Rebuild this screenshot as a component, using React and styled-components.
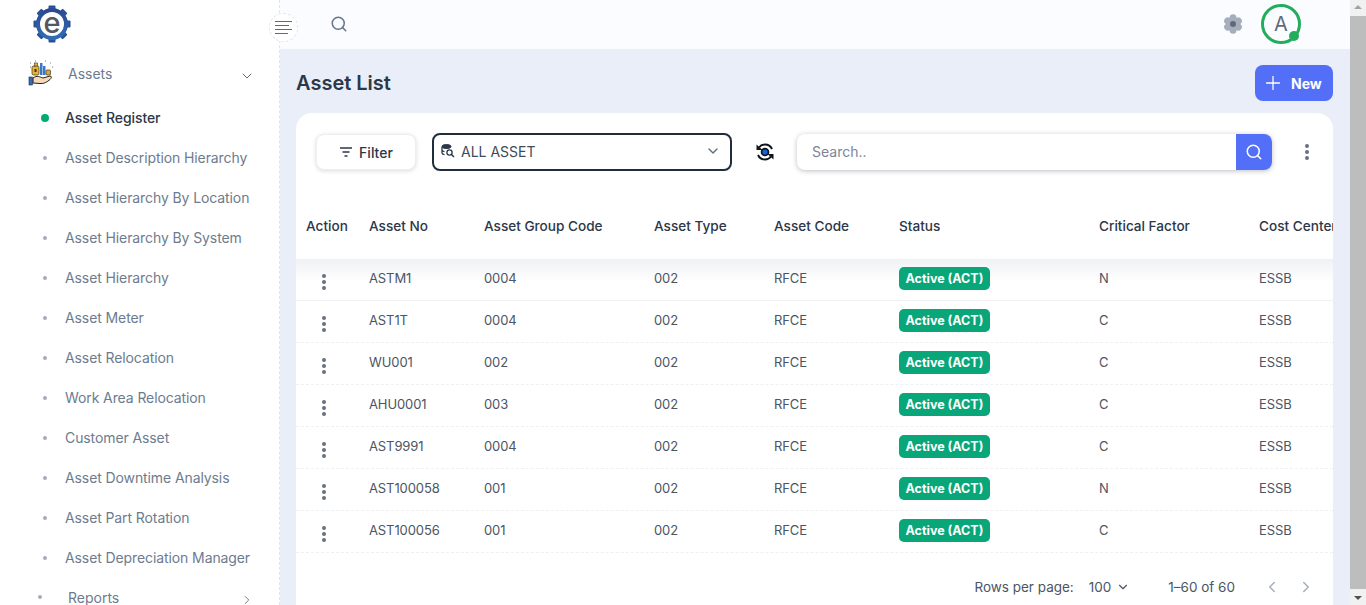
import React from "react";
import styled, { createGlobalStyle } from "styled-components";
import { ChevronDown, ChevronLeft, ChevronRight, Plus, Search } from "lucide-react";

const navItems = [
  "Asset Register",
  "Asset Description Hierarchy",
  "Asset Hierarchy By Location",
  "Asset Hierarchy By System",
  "Asset Hierarchy",
  "Asset Meter",
  "Asset Relocation",
  "Work Area Relocation",
  "Customer Asset",
  "Asset Downtime Analysis",
  "Asset Part Rotation",
  "Asset Depreciation Manager",
];

const columns = ["Action", "Asset No", "Asset Group Code", "Asset Type", "Asset Code", "Status", "Critical Factor", "Cost Center"];

const rows = [
  ["ASTM1", "0004", "N"],
  ["AST1T", "0004", "C"],
  ["WU001", "002", "C"],
  ["AHU0001", "003", "C"],
  ["AST9991", "0004", "C"],
  ["AST100058", "001", "N"],
  ["AST100056", "001", "C"],
];

const GlobalStyle = createGlobalStyle`
  html, body { margin: 0; padding: 0; overflow: hidden; }
  body { font-family: Inter, "Noto Sans", sans-serif; }
  * { box-sizing: border-box; }
`;

const Page = styled.div`
  display: flex;
  width: 1366px;
  height: 605px;
  overflow: hidden;
  position: relative;
`;

const Sidebar = styled.aside`
  width: 280px;
  flex: none;
  background: #fff;
  border-right: 1px dashed #dfe3ea;
`;

const LogoBox = styled.div`
  height: 50px;
  padding: 5px 0 0 33px;
`;

const MenuRow = styled.div`
  display: flex;
  align-items: center;
  height: ${(p) => p.$h}px;
  padding: 0 24px 2px ${(p) => p.$left}px;
  color: #6d7b8f;
  font-size: 14px;
`;

const MenuIcon = styled.span`
  width: ${(p) => p.$w}px;
  flex: none;
  display: flex;
  align-items: center;
`;

const SmallDot = styled.i`
  width: 4px;
  height: 4px;
  border-radius: 50%;
  background: #a3adba;
`;

const MenuLabel = styled.span`
  flex: 1;
`;

const MenuChevron = styled.span`
  display: flex;
  margin: 5px ${(p) => p.$right}px 0 0;
  color: #5f6b7c;
`;

const NavItem = styled.div`
  display: flex;
  align-items: center;
  height: 40px;
  padding: 0 0 2px 41px;
  font-size: 14px;
  letter-spacing: -0.1px;
  font-weight: ${(p) => (p.$active ? 500 : 400)};
  color: ${(p) => (p.$active ? "#2d3748" : "#6d7b8f")};
`;

const NavDot = styled.i`
  width: ${(p) => (p.$active ? 8 : 4)}px;
  height: ${(p) => (p.$active ? 8 : 4)}px;
  margin: 2px ${(p) => (p.$active ? 16 : 18)}px 0 ${(p) => (p.$active ? 0 : 2)}px;
  border-radius: 50%;
  background: ${(p) => (p.$active ? "#00ab6f" : "#a3adba")};
`;

const Toggle = styled.div`
  position: absolute;
  left: 269px;
  top: 13px;
  width: 29px;
  height: 29px;
  border-radius: 50%;
  border: 1px dashed #e3e6ec;
  background: #fff;
  display: flex;
  flex-direction: column;
  justify-content: center;
  gap: 3px;
  padding-left: 5px;
`;

const ToggleLine = styled.i`
  display: block;
  height: 1px;
  width: ${(p) => p.$w}px;
  background: #5f6b7c;
`;

const Main = styled.div`
  flex: 1;
  min-width: 0;
  display: flex;
  flex-direction: column;
  background: #e9eef9;
`;

const TopBar = styled.header`
  height: 49px;
  flex: none;
  background: #fbfcff;
  display: flex;
  align-items: center;
  padding: 0 49px 1px 50px;
  color: #64748b;
`;

const Grow = styled.div`
  flex: 1;
`;

const Avatar = styled.div`
  position: relative;
  width: 40px;
  height: 40px;
  margin-left: 18px;
  border: 3px solid #22ad5c;
  border-radius: 50%;
  display: flex;
  align-items: center;
  justify-content: center;
  font-size: 20px;
  color: #5f6b7c;
`;

const OnlineDot = styled.i`
  position: absolute;
  right: -1px;
  bottom: 0;
  width: 10px;
  height: 10px;
  border-radius: 50%;
  background: #22ad5c;
`;

const Content = styled.main`
  flex: 1;
  min-height: 0;
  padding: 16px 17px 0 16px;
  display: flex;
  flex-direction: column;
`;

const TitleRow = styled.div`
  display: flex;
  align-items: center;
  justify-content: space-between;
  height: 36px;
  margin-bottom: 12px;
`;

const Title = styled.h1`
  margin: 0;
  font-size: 20px;
  font-weight: 600;
  color: #2d3748;
`;

const NewButton = styled.button`
  width: 78px;
  height: 36px;
  border: 0;
  border-radius: 8px;
  background: #536ff8;
  color: #fff;
  font: 700 14px Inter, sans-serif;
  display: flex;
  align-items: center;
  padding: 0 0 0 7px;
  gap: 7px;
`;

const Card = styled.section`
  flex: 1;
  min-height: 0;
  background: #fff;
  border-radius: 16px 16px 0 0;
  overflow: hidden;
`;

const Toolbar = styled.div`
  display: flex;
  align-items: center;
  height: 78px;
  padding: 0 20px;
`;

const FilterButton = styled.button`
  width: 100px;
  height: 36px;
  flex: none;
  border: 1px solid #eceef2;
  border-radius: 8px;
  background: #fff;
  box-shadow: 0 1px 4px rgba(30, 40, 60, 0.16);
  font: 500 14px Inter, sans-serif;
  color: #2d3748;
  display: flex;
  align-items: center;
  justify-content: center;
  gap: 6px;
`;

const SelectBox = styled.div`
  width: 300px;
  height: 38px;
  flex: none;
  margin-left: 16px;
  border: 2px solid #1f2d3d;
  border-radius: 8px;
  display: flex;
  align-items: center;
  padding: 0 9px 2px 7px;
  font-size: 14px;
  color: #3f4a5a;
  gap: 6px;
`;

const RefreshWrap = styled.span`
  display: flex;
  flex: none;
  margin-left: 23px;
`;

const SearchBox = styled.div`
  width: 475px;
  height: 36px;
  flex: none;
  margin-left: 22px;
  display: flex;
  align-items: center;
  border-radius: 8px;
  box-shadow: 0 1px 5px rgba(30, 40, 60, 0.3);
  font-size: 14px;
  color: #7b8696;
  padding-left: 15px;
  overflow: hidden;
`;

const SearchHint = styled.span`
  flex: 1;
  padding-bottom: 2px;
`;

const SearchButton = styled.div`
  width: 36px;
  height: 36px;
  background: #536ff8;
  color: #fff;
  display: flex;
  align-items: center;
  justify-content: center;
`;

const ToolbarMore = styled.span`
  flex: none;
  margin: -8px 0 0 17px;
`;

const Table = styled.div`
  width: 1037px;
`;

const gridCols = "63px 115px 170px 120px 125px 200px 160px 160px";

const HeadRow = styled.div`
  display: grid;
  grid-template-columns: ${gridCols};
  align-items: center;
  height: 68px;
  padding: 2px 0 0 10px;
  white-space: nowrap;
  font-size: 13.6px;
  font-weight: 500;
  color: #2d3748;
`;

const Row = styled.div`
  display: grid;
  grid-template-columns: ${gridCols};
  align-items: center;
  height: 42px;
  padding: 0 0 3px 10px;
  border-bottom: 1px dashed #eef0f3;
  font-size: 13px;
  letter-spacing: -0.1px;
  color: #4b5563;
  background: ${(p) => (p.$first ? "linear-gradient(#f0f1f5, #fff 55%)" : "#fff")};
`;

const Dots = styled.div`
  display: flex;
  flex-direction: column;
  gap: 2px;
  width: 4px;
  margin: 8px 0 0 16px;
`;

const Dot = styled.i`
  width: 4px;
  height: 4px;
  border-radius: 50%;
  background: #66727f;
`;

const Badge = styled.span`
  justify-self: start;
  height: 23px;
  width: 91px;
  margin-top: 1px;
  padding-bottom: 1px;
  border-radius: 5px;
  background: #08a678;
  color: #fff;
  font-size: 12.5px;
  font-weight: 700;
  letter-spacing: 0;
  display: flex;
  align-items: center;
  justify-content: center;
`;

const Pager = styled.div`
  display: flex;
  align-items: center;
  height: 66px;
  padding: 2px 18px 0 0;
  justify-content: flex-end;
  font-size: 13.5px;
  color: #4b5563;
`;

const PagerSize = styled.span`
  display: flex;
  align-items: center;
  gap: 5px;
  margin: 0 38px 0 15px;
`;

const PagerArrows = styled.span`
  display: flex;
  gap: 16px;
  margin-left: 28px;
  color: #a6aeb9;
`;

const ScrollTrack = styled.div`
  width: 16px;
  flex: none;
  background: #f1f1f1;
  display: flex;
  flex-direction: column;
  align-items: center;
`;

const ScrollArrow = styled.div`
  width: 0;
  height: 0;
  margin: 5px 0;
  border-left: 4px solid transparent;
  border-right: 4px solid transparent;
  border-${(p) => (p.$up ? "bottom" : "top")}: 4px solid ${(p) => (p.$up ? "#a3a3a3" : "#505050")};
`;

const ScrollThumb = styled.div`
  flex: 1;
  width: 100%;
  margin: 2px 0;
  background: #bdbdbd;
`;

function Logo() {
  const teeth = [0, 45, 90, 135, 180, 225, 270, 315];
  return (
    <svg width="38" height="38" viewBox="0 0 38 38">
      <defs>
        <linearGradient id="gearBlue" x1="0" y1="0" x2="0" y2="1">
          <stop offset="0" stopColor="#2b4a8f" />
          <stop offset="1" stopColor="#2f6db5" />
        </linearGradient>
      </defs>
      {teeth.map((a) => (
        <rect key={a} x="15.5" y="0.5" width="7" height="7" rx="1" fill="url(#gearBlue)" transform={`rotate(${a} 19 19)`} />
      ))}
      <circle cx="19" cy="19" r="14" fill="#fff" stroke="url(#gearBlue)" strokeWidth="4" />
      <text x="19" y="28" textAnchor="middle" fontFamily="Inter, sans-serif" fontSize="29" fontWeight="500" fill="#55585e">e</text>
    </svg>
  );
}

function AssetIcon() {
  return (
    <svg width="26" height="26" viewBox="0 0 26 26">
      <path d="M2 3h1M2 7h1M22 3h1M24 7h1M7 1h1M17 1h1" stroke="#555" strokeWidth="0.8" />
      <rect x="4" y="6" width="7" height="9" rx="1.500" fill="#eab32c" stroke="#333" strokeWidth="0.7" />
      <rect x="6.500" y="3" width="3" height="3" fill="#eab32c" stroke="#333" strokeWidth="0.6" />
      <rect x="6.500" y="9" width="2" height="3" fill="#333" />
      <rect x="12" y="3" width="2.500" height="12" fill="#3c78c8" />
      <rect x="15" y="6" width="2.500" height="9" fill="#3c78c8" />
      <rect x="18" y="10" width="4.500" height="5" rx="1" fill="#e2a92c" stroke="#333" strokeWidth="0.7" />
      <path d="M5 18 C9 15 12 17 15 18 L22 16 C24 16 23.500 18.500 22 19.500 C19 22 16 24 12 23.500 L5 23 Z" fill="#f6d9b8" stroke="#222" strokeWidth="1" />
      <rect x="1" y="17" width="3.500" height="8" fill="#2f6db5" stroke="#1b2a45" strokeWidth="0.6" />
    </svg>
  );
}

function SearchDbIcon() {
  return (
    <svg width="14" height="14" viewBox="0 0 14 14" fill="none" stroke="#2d3748">
      <ellipse cx="5.500" cy="2.500" rx="4.500" ry="2" fill="#2d3748" />
      <path d="M1 3v6c0 .8 1 1.400 2.500 1.700M1 6c0 .8 1 1.400 2.500 1.700" strokeWidth="1.300" />
      <circle cx="8.500" cy="8.500" r="2.600" strokeWidth="1.300" />
      <path d="M10.500 10.500 13 13" strokeWidth="1.500" />
    </svg>
  );
}

function RefreshEye() {
  return (
    <svg width="20" height="20" viewBox="0 0 20 20" fill="none">
      <path d="M4 5.500C5.500 3.500 7.500 2.500 10 2.500c3.200 0 5.700 1.700 7 4.500" stroke="#10151c" strokeWidth="2" />
      <path d="M16 14.500c-1.500 2-3.500 3-6 3-3.200 0-5.700-1.700-7-4.500" stroke="#10151c" strokeWidth="2" />
      <path d="M1.500 2.500 7.500 8H1.500zM18.500 17.500 12.500 12h6z" fill="#10151c" />
      <circle cx="10" cy="10" r="4.300" fill="#10151c" />
      <circle cx="10" cy="10" r="2.600" fill="#1662d8" />
    </svg>
  );
}

function SettingsIcon() {
  const petals = [0, 60, 120, 180, 240, 300];
  return (
    <svg width="20" height="20" viewBox="0 0 20 20">
      {petals.map((a) => (
        <circle key={a} cx="10" cy="3.800" r="3.500" fill="#a5aeba" transform={`rotate(${a} 10 10)`} />
      ))}
      <circle cx="10" cy="10" r="6.500" fill="#a5aeba" />
      <circle cx="10" cy="10" r="3" fill="#5f6b7c" />
    </svg>
  );
}

function FilterIcon() {
  return (
    <svg width="14" height="12" viewBox="0 0 14 12" fill="none" stroke="#2d3748" strokeWidth="1.500">
      <path d="M1 2h12M3.500 6h7M5.500 10h3" />
    </svg>
  );
}

function MoreDots() {
  return (
    <Dots>
      <Dot />
      <Dot />
      <Dot />
    </Dots>
  );
}

export default function App() {
  return (
    <Page>
      <GlobalStyle />
      <Sidebar>
        <LogoBox>
          <Logo />
        </LogoBox>
        <MenuRow $h={48} $left={28}>
          <MenuIcon $w={40}>
            <AssetIcon />
          </MenuIcon>
          <MenuLabel>Assets</MenuLabel>
          <MenuChevron $right={0}>
            <ChevronDown size={16} strokeWidth={1.500} />
          </MenuChevron>
        </MenuRow>
        {navItems.map((item, i) => (
          <NavItem key={item} $active={i === 0}>
            <NavDot $active={i === 0} />
            {item}
          </NavItem>
        ))}
        <MenuRow $h={40} $left={38}>
          <MenuIcon $w={30}>
            <SmallDot />
          </MenuIcon>
          <MenuLabel>Reports</MenuLabel>
          <MenuChevron $right={1}>
            <ChevronRight size={14} strokeWidth={1.500} />
          </MenuChevron>
        </MenuRow>
      </Sidebar>
      <Toggle>
        <ToggleLine $w={17} />
        <ToggleLine $w={14} />
        <ToggleLine $w={17} />
        <ToggleLine $w={13} />
      </Toggle>
      <Main>
        <TopBar>
          <Search size={18} />
          <Grow />
          <SettingsIcon />
          <Avatar>
            A
            <OnlineDot />
          </Avatar>
        </TopBar>
        <Content>
          <TitleRow>
            <Title>Asset List</Title>
            <NewButton>
              <Plus size={22} strokeWidth={1.400} />
              New
            </NewButton>
          </TitleRow>
          <Card>
            <Toolbar>
              <FilterButton>
                <FilterIcon />
                Filter
              </FilterButton>
              <SelectBox>
                <SearchDbIcon />
                <Grow>ALL ASSET</Grow>
                <ChevronDown size={16} color="#5f6b7c" />
              </SelectBox>
              <RefreshWrap>
                <RefreshEye />
              </RefreshWrap>
              <SearchBox>
                <SearchHint>Search..</SearchHint>
                <SearchButton>
                  <Search size={18} />
                </SearchButton>
              </SearchBox>
              <ToolbarMore>
                <MoreDots />
              </ToolbarMore>
            </Toolbar>
            <Table>
              <HeadRow>
                {columns.map((c) => (
                  <span key={c}>{c}</span>
                ))}
              </HeadRow>
              {rows.map((r, i) => (
                <Row key={r[0]} $first={i === 0}>
                  <MoreDots />
                  <span>{r[0]}</span>
                  <span>{r[1]}</span>
                  <span>002</span>
                  <span>RFCE</span>
                  <Badge>Active (ACT)</Badge>
                  <span>{r[2]}</span>
                  <span>ESSB</span>
                </Row>
              ))}
            </Table>
            <Pager>
              Rows per page:
              <PagerSize>
                100 <ChevronDown size={14} />
              </PagerSize>
              1–60 of 60
              <PagerArrows>
                <ChevronLeft size={18} />
                <ChevronRight size={18} />
              </PagerArrows>
            </Pager>
          </Card>
        </Content>
      </Main>
      <ScrollTrack>
        <ScrollArrow $up />
        <ScrollThumb />
        <ScrollArrow />
      </ScrollTrack>
    </Page>
  );
}
